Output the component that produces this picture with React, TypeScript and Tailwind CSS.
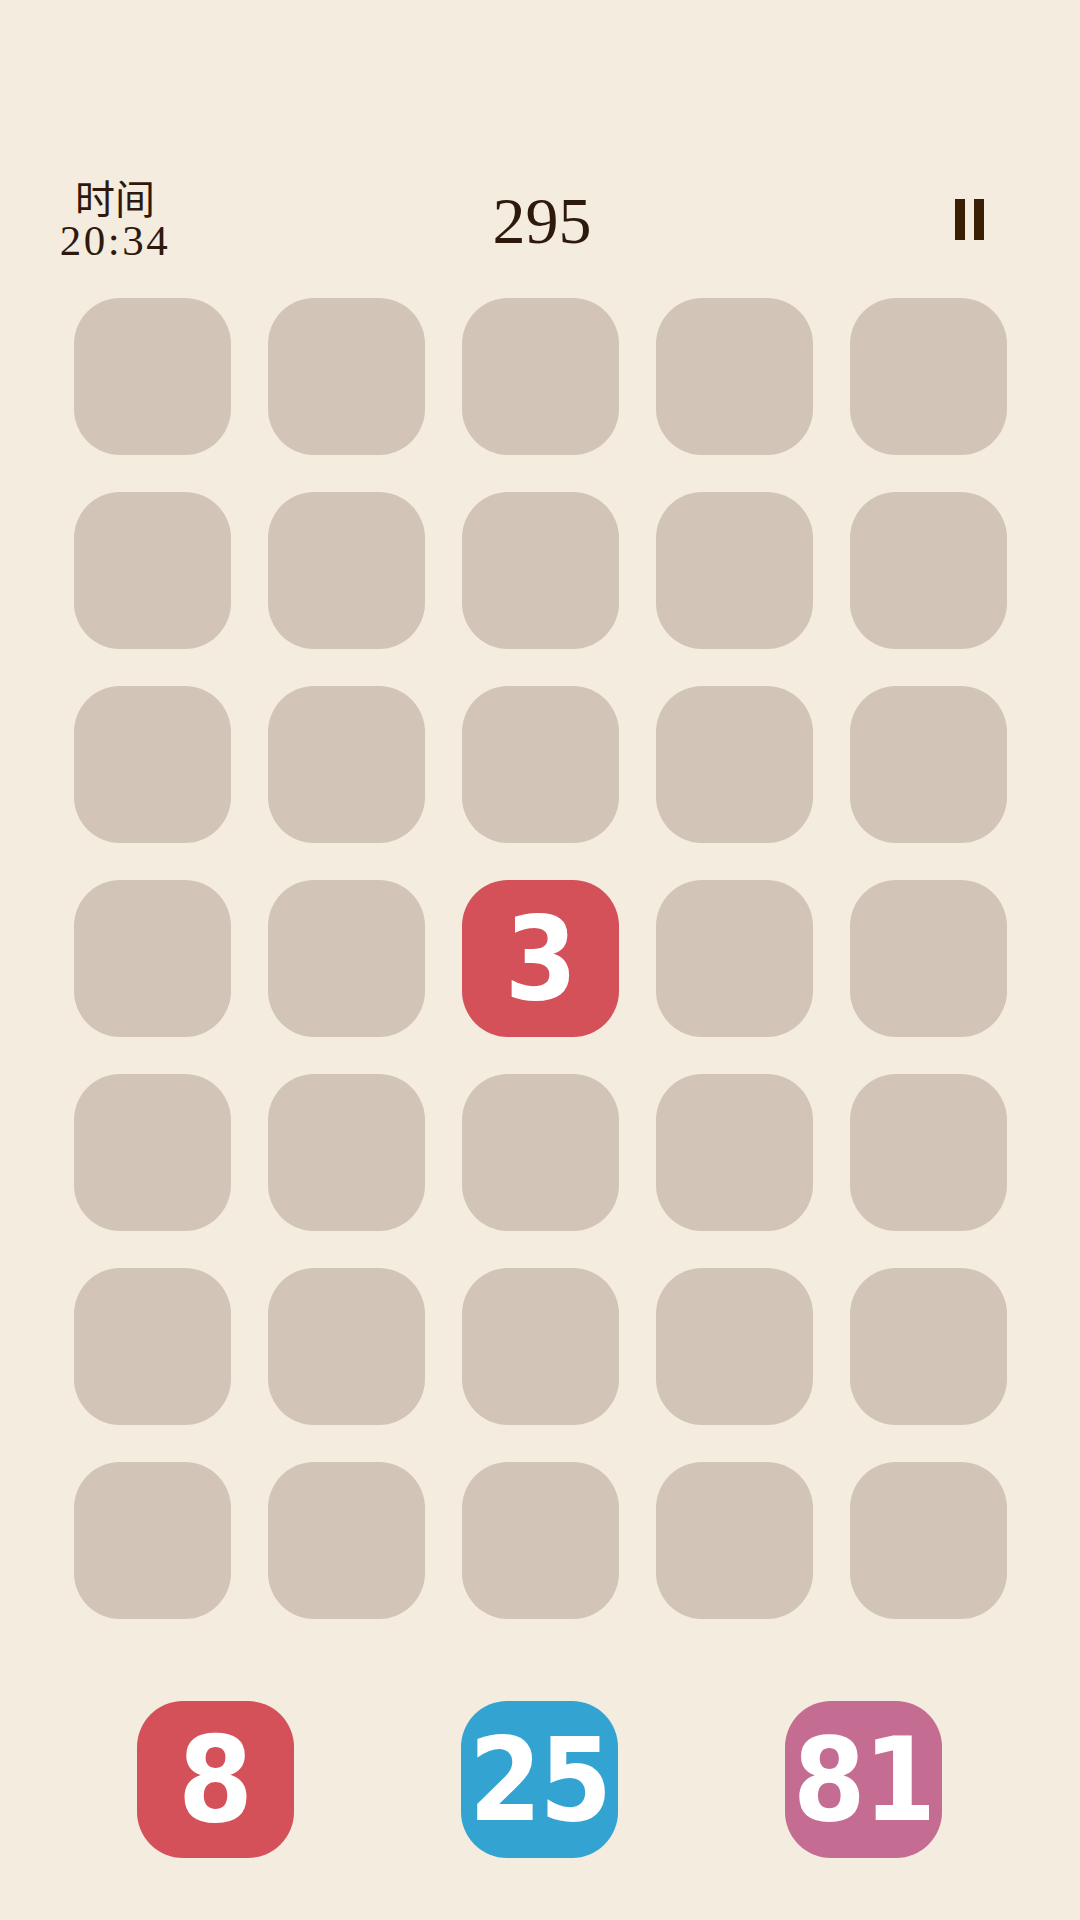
import React from "react";

const serif = { fontFamily: '"Liberation Serif", "Noto Sans CJK SC", serif' };

type Cell = { n?: number; c?: string };

const rows = 7;
const cols = 5;

function Tile({ n, c, big }: { n?: number; c?: string; big?: boolean }) {
  if (n === undefined) {
    return <div className="w-[157px] h-[157px] rounded-[46px] bg-[#d2c4b7]" />;
  }
  return (
    <div
      className={`w-[157px] h-[157px] rounded-[46px] flex items-center justify-center text-white font-bold font-stretch-condensed ${c}`}
      style={{ fontFamily: '"DejaVu Sans Condensed", "DejaVu Sans", sans-serif' }}
    >
      <span className={big ? "text-[120px] leading-none" : "text-[116px] leading-none tracking-[-2px]"}>{n}</span>
    </div>
  );
}

export default function App() {
  const cells: Cell[] = [];
  for (let r = 0; r < rows; r++) {
    for (let k = 0; k < cols; k++) {
      if (r === 3 && k === 2) cells.push({ n: 3, c: "bg-[#d4515a]" });
      else cells.push({});
    }
  }
  return (
    <div className="w-[1080px] h-[1920px] bg-[#f5ece0] flex flex-col items-center pt-[177px]">
      <div className="w-full grid grid-cols-[110px_1fr_110px] items-center pl-[60px] pr-[56px]">
        <div className="flex flex-col items-center text-[#2e1a0c]">
          <div
            className="text-[40px] leading-[40px]"
            style={{ fontFamily: '"Noto Sans CJK SC", sans-serif' }}
          >
            时间
          </div>
          <div className="text-[43px] leading-[48px] tracking-[2.5px]" style={serif}>
            20:34
          </div>
        </div>
        <div className="text-center text-[66px] leading-[74px] text-[#2e1a0c]" style={serif}>
          295
        </div>
        <div className="flex justify-center mb-[4px]">
          <div className="flex gap-[9px]">
            <div className="w-[10px] h-[41px] bg-[#3a1f05]" />
            <div className="w-[10px] h-[41px] bg-[#3a1f05]" />
          </div>
        </div>
      </div>

      <div className="mt-[33px] grid grid-cols-[repeat(5,157px)] gap-[37px]">
        {cells.map((cell, i) => (
          <Tile key={i} n={cell.n} c={cell.c} />
        ))}
      </div>

      <div className="w-full flex pl-[137px] gap-[167px] mt-[82px]">
        <Tile n={8} c="bg-[#d4515a]" big />
        <Tile n={25} c="bg-[#33a3d2]" />
        <Tile n={81} c="bg-[#c46c92]" />
      </div>
    </div>
  );
}
